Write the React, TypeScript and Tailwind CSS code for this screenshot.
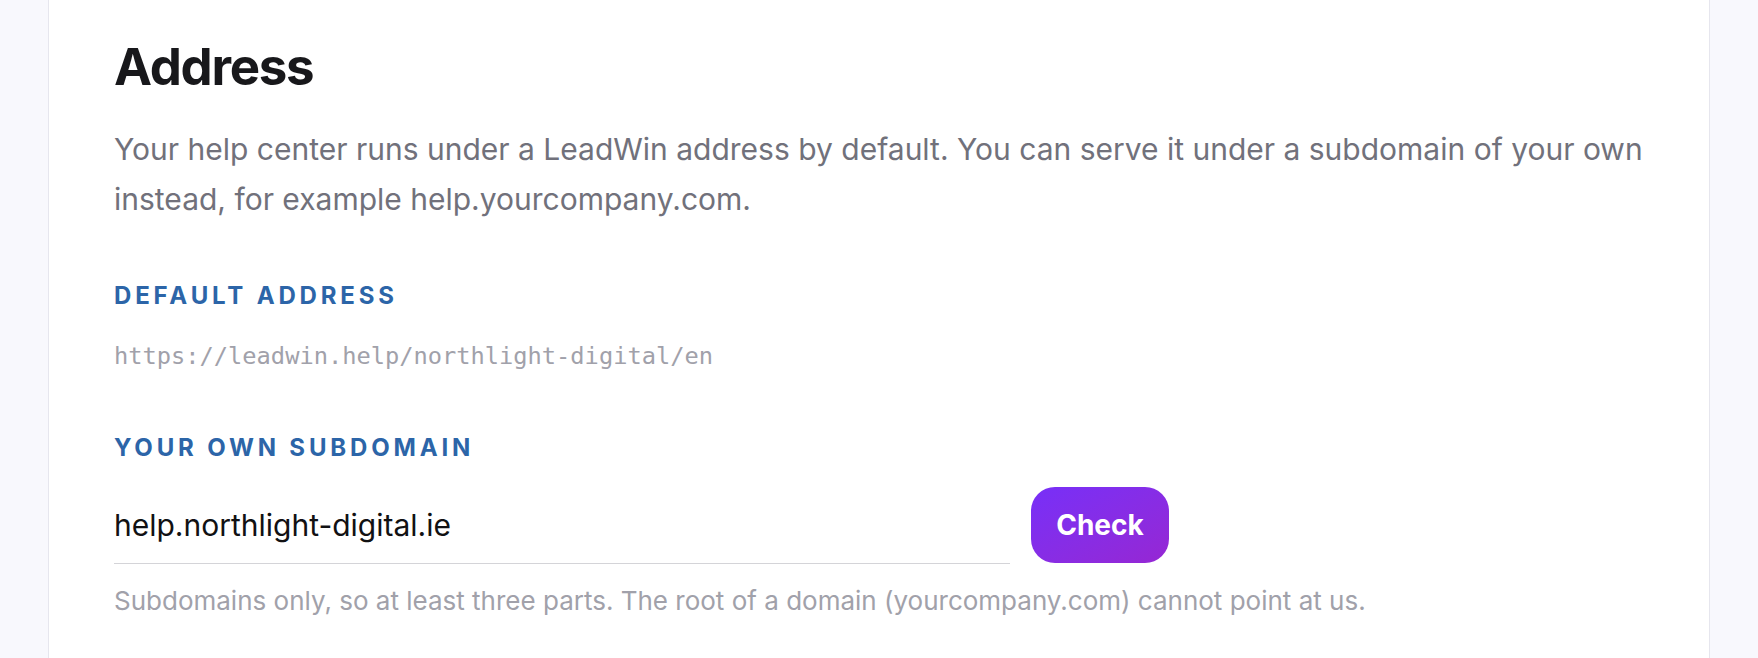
export default function App() {
  return (
    <div className="min-h-screen bg-[#f8f8fd] px-12 font-['Inter',sans-serif]">
      <section className="min-h-[658px] border-x border-[#e6e6ee] bg-white px-[65px] pt-[39px] pb-16">
        <h1 className="text-[51px] leading-[1.1] font-bold tracking-tight text-[#18181b]">Address</h1>
        <p className="mt-[29px] text-[30px] leading-[50px] text-[#71717b]">
          Your help center runs under a LeadWin address by default. You can serve it under a subdomain of your own
          instead, for example help.yourcompany.com.
        </p>

        <h2 className="mt-[58px] text-[24px] leading-[28px] font-bold uppercase tracking-[0.16em] text-[#2c65a8]">
          Default address
        </h2>
        <p className="mt-[32px] font-['DejaVu_Sans_Mono',monospace] text-[23.7px] leading-[28px] text-[#a1a1aa]">
          https://leadwin.help/northlight-digital/en
        </p>

        <h2 className="mt-[64px] text-[24px] leading-[28px] font-bold uppercase tracking-[0.16em] text-[#2c65a8]">
          Your own subdomain
        </h2>
        <div className="mt-[25px] flex items-end gap-[21px]">
          <input
            type="text"
            defaultValue="help.northlight-digital.ie"
            className="h-[77px] w-[896px] border-b border-[#d4d4d8] bg-transparent text-[30px] text-[#111113] outline-none"
          />
          <button className="mb-px h-[76px] w-[138px] rounded-[24px] bg-linear-to-br from-[#772ff8] to-[#9626d3] text-[28px] font-bold text-white">
            Check
          </button>
        </div>
        <p className="mt-[21px] text-[26px] leading-[32px] text-[#a1a1aa]">
          Subdomains only, so at least three parts. The root of a domain (yourcompany.com) cannot point at us.
        </p>
      </section>
    </div>
  );
}
